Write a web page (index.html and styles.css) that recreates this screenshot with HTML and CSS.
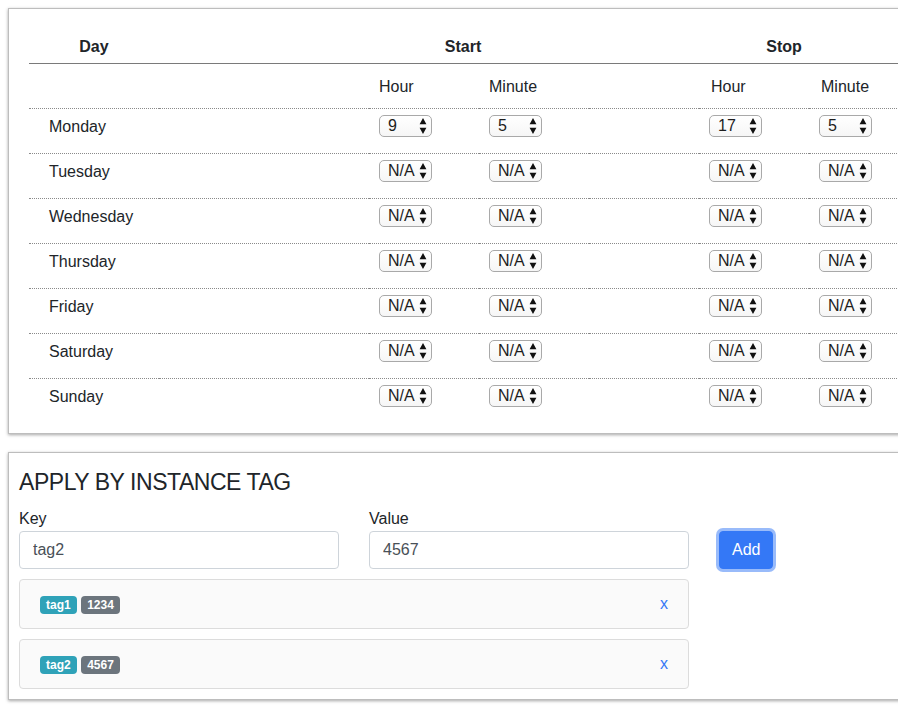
FILE: index.html
```html
<!DOCTYPE html>
<html lang="en">
<head>
<meta charset="utf-8">
<title>Schedule</title>
<link rel="stylesheet" href="styles.css">
</head>
<body>
<div class="viewport">
  <section class="card schedule">
    <table class="sched">
      <colgroup>
        <col class="c-day"><col class="c-gap1"><col class="c-num"><col class="c-num"><col class="c-gap2"><col class="c-num"><col class="c-num">
      </colgroup>
      <thead>
        <tr class="group">
          <th class="g-day">Day</th><th></th><th colspan="2" class="g-start">Start</th><th></th><th colspan="2" class="g-stop">Stop</th>
        </tr>
        <tr class="sub">
          <td></td><td></td><td>Hour</td><td>Minute</td><td></td><td class="stop-h">Hour</td><td class="stop-h">Minute</td>
        </tr>
      </thead>
      <tbody>
        <tr>
          <td class="day">Monday</td><td></td>
          <td><span class="sel"><span class="sel-v">9</span><svg class="arr" viewBox="0 0 8 18" width="8" height="18"><path d="M0.6 7.2 L4 1 L7.4 7.2 Z M0.6 10.8 L4 17 L7.4 10.8 Z"/></svg></span></td>
          <td><span class="sel"><span class="sel-v">5</span><svg class="arr" viewBox="0 0 8 18" width="8" height="18"><path d="M0.6 7.2 L4 1 L7.4 7.2 Z M0.6 10.8 L4 17 L7.4 10.8 Z"/></svg></span></td>
          <td></td>
          <td><span class="sel"><span class="sel-v">17</span><svg class="arr" viewBox="0 0 8 18" width="8" height="18"><path d="M0.6 7.2 L4 1 L7.4 7.2 Z M0.6 10.8 L4 17 L7.4 10.8 Z"/></svg></span></td>
          <td><span class="sel"><span class="sel-v">5</span><svg class="arr" viewBox="0 0 8 18" width="8" height="18"><path d="M0.6 7.2 L4 1 L7.4 7.2 Z M0.6 10.8 L4 17 L7.4 10.8 Z"/></svg></span></td>
        </tr>
        <tr>
          <td class="day">Tuesday</td><td></td>
          <td><span class="sel"><span class="sel-v">N/A</span><svg class="arr" viewBox="0 0 8 18" width="8" height="18"><path d="M0.6 7.2 L4 1 L7.4 7.2 Z M0.6 10.8 L4 17 L7.4 10.8 Z"/></svg></span></td>
          <td><span class="sel"><span class="sel-v">N/A</span><svg class="arr" viewBox="0 0 8 18" width="8" height="18"><path d="M0.6 7.2 L4 1 L7.4 7.2 Z M0.6 10.8 L4 17 L7.4 10.8 Z"/></svg></span></td>
          <td></td>
          <td><span class="sel"><span class="sel-v">N/A</span><svg class="arr" viewBox="0 0 8 18" width="8" height="18"><path d="M0.6 7.2 L4 1 L7.4 7.2 Z M0.6 10.8 L4 17 L7.4 10.8 Z"/></svg></span></td>
          <td><span class="sel"><span class="sel-v">N/A</span><svg class="arr" viewBox="0 0 8 18" width="8" height="18"><path d="M0.6 7.2 L4 1 L7.4 7.2 Z M0.6 10.8 L4 17 L7.4 10.8 Z"/></svg></span></td>
        </tr>
        <tr>
          <td class="day">Wednesday</td><td></td>
          <td><span class="sel"><span class="sel-v">N/A</span><svg class="arr" viewBox="0 0 8 18" width="8" height="18"><path d="M0.6 7.2 L4 1 L7.4 7.2 Z M0.6 10.8 L4 17 L7.4 10.8 Z"/></svg></span></td>
          <td><span class="sel"><span class="sel-v">N/A</span><svg class="arr" viewBox="0 0 8 18" width="8" height="18"><path d="M0.6 7.2 L4 1 L7.4 7.2 Z M0.6 10.8 L4 17 L7.4 10.8 Z"/></svg></span></td>
          <td></td>
          <td><span class="sel"><span class="sel-v">N/A</span><svg class="arr" viewBox="0 0 8 18" width="8" height="18"><path d="M0.6 7.2 L4 1 L7.4 7.2 Z M0.6 10.8 L4 17 L7.4 10.8 Z"/></svg></span></td>
          <td><span class="sel"><span class="sel-v">N/A</span><svg class="arr" viewBox="0 0 8 18" width="8" height="18"><path d="M0.6 7.2 L4 1 L7.4 7.2 Z M0.6 10.8 L4 17 L7.4 10.8 Z"/></svg></span></td>
        </tr>
        <tr>
          <td class="day">Thursday</td><td></td>
          <td><span class="sel"><span class="sel-v">N/A</span><svg class="arr" viewBox="0 0 8 18" width="8" height="18"><path d="M0.6 7.2 L4 1 L7.4 7.2 Z M0.6 10.8 L4 17 L7.4 10.8 Z"/></svg></span></td>
          <td><span class="sel"><span class="sel-v">N/A</span><svg class="arr" viewBox="0 0 8 18" width="8" height="18"><path d="M0.6 7.2 L4 1 L7.4 7.2 Z M0.6 10.8 L4 17 L7.4 10.8 Z"/></svg></span></td>
          <td></td>
          <td><span class="sel"><span class="sel-v">N/A</span><svg class="arr" viewBox="0 0 8 18" width="8" height="18"><path d="M0.6 7.2 L4 1 L7.4 7.2 Z M0.6 10.8 L4 17 L7.4 10.8 Z"/></svg></span></td>
          <td><span class="sel"><span class="sel-v">N/A</span><svg class="arr" viewBox="0 0 8 18" width="8" height="18"><path d="M0.6 7.2 L4 1 L7.4 7.2 Z M0.6 10.8 L4 17 L7.4 10.8 Z"/></svg></span></td>
        </tr>
        <tr>
          <td class="day">Friday</td><td></td>
          <td><span class="sel"><span class="sel-v">N/A</span><svg class="arr" viewBox="0 0 8 18" width="8" height="18"><path d="M0.6 7.2 L4 1 L7.4 7.2 Z M0.6 10.8 L4 17 L7.4 10.8 Z"/></svg></span></td>
          <td><span class="sel"><span class="sel-v">N/A</span><svg class="arr" viewBox="0 0 8 18" width="8" height="18"><path d="M0.6 7.2 L4 1 L7.4 7.2 Z M0.6 10.8 L4 17 L7.4 10.8 Z"/></svg></span></td>
          <td></td>
          <td><span class="sel"><span class="sel-v">N/A</span><svg class="arr" viewBox="0 0 8 18" width="8" height="18"><path d="M0.6 7.2 L4 1 L7.4 7.2 Z M0.6 10.8 L4 17 L7.4 10.8 Z"/></svg></span></td>
          <td><span class="sel"><span class="sel-v">N/A</span><svg class="arr" viewBox="0 0 8 18" width="8" height="18"><path d="M0.6 7.2 L4 1 L7.4 7.2 Z M0.6 10.8 L4 17 L7.4 10.8 Z"/></svg></span></td>
        </tr>
        <tr>
          <td class="day">Saturday</td><td></td>
          <td><span class="sel"><span class="sel-v">N/A</span><svg class="arr" viewBox="0 0 8 18" width="8" height="18"><path d="M0.6 7.2 L4 1 L7.4 7.2 Z M0.6 10.8 L4 17 L7.4 10.8 Z"/></svg></span></td>
          <td><span class="sel"><span class="sel-v">N/A</span><svg class="arr" viewBox="0 0 8 18" width="8" height="18"><path d="M0.6 7.2 L4 1 L7.4 7.2 Z M0.6 10.8 L4 17 L7.4 10.8 Z"/></svg></span></td>
          <td></td>
          <td><span class="sel"><span class="sel-v">N/A</span><svg class="arr" viewBox="0 0 8 18" width="8" height="18"><path d="M0.6 7.2 L4 1 L7.4 7.2 Z M0.6 10.8 L4 17 L7.4 10.8 Z"/></svg></span></td>
          <td><span class="sel"><span class="sel-v">N/A</span><svg class="arr" viewBox="0 0 8 18" width="8" height="18"><path d="M0.6 7.2 L4 1 L7.4 7.2 Z M0.6 10.8 L4 17 L7.4 10.8 Z"/></svg></span></td>
        </tr>
        <tr class="last">
          <td class="day">Sunday</td><td></td>
          <td><span class="sel"><span class="sel-v">N/A</span><svg class="arr" viewBox="0 0 8 18" width="8" height="18"><path d="M0.6 7.2 L4 1 L7.4 7.2 Z M0.6 10.8 L4 17 L7.4 10.8 Z"/></svg></span></td>
          <td><span class="sel"><span class="sel-v">N/A</span><svg class="arr" viewBox="0 0 8 18" width="8" height="18"><path d="M0.6 7.2 L4 1 L7.4 7.2 Z M0.6 10.8 L4 17 L7.4 10.8 Z"/></svg></span></td>
          <td></td>
          <td><span class="sel"><span class="sel-v">N/A</span><svg class="arr" viewBox="0 0 8 18" width="8" height="18"><path d="M0.6 7.2 L4 1 L7.4 7.2 Z M0.6 10.8 L4 17 L7.4 10.8 Z"/></svg></span></td>
          <td><span class="sel"><span class="sel-v">N/A</span><svg class="arr" viewBox="0 0 8 18" width="8" height="18"><path d="M0.6 7.2 L4 1 L7.4 7.2 Z M0.6 10.8 L4 17 L7.4 10.8 Z"/></svg></span></td>
        </tr>
      </tbody>
    </table>
  </section>

  <section class="card tags">
    <h4 class="tags-title">APPLY BY INSTANCE TAG</h4>
    <div class="tag-form">
      <div class="field">
        <label class="field-label">Key</label>
        <input class="field-input" type="text" value="tag2">
      </div>
      <div class="field">
        <label class="field-label">Value</label>
        <input class="field-input" type="text" value="4567">
      </div>
      <div class="field-action">
        <button class="btn-add" type="button">Add</button>
      </div>
    </div>
    <ul class="tag-list">
      <li class="tag-item">
        <span class="badges"><span class="badge badge-key">tag1</span> <span class="badge badge-val">1234</span></span>
        <a class="tag-remove">x</a>
      </li>
      <li class="tag-item">
        <span class="badges"><span class="badge badge-key">tag2</span> <span class="badge badge-val">4567</span></span>
        <a class="tag-remove">x</a>
      </li>
    </ul>
  </section>
</div>
</body>
</html>
```

FILE: styles.css
```css
* { box-sizing: border-box; }

html, body {
  margin: 0;
  padding: 0;
  background: #ffffff;
  overflow: hidden;
}

body {
  font-family: "Liberation Sans", Arial, Helvetica, sans-serif;
  font-size: 16px;
  line-height: 24px;
  color: #212529;
}

.viewport {
  width: 898px;
  height: 709px;
  overflow: hidden;
  padding: 8px;
}

.card {
  width: 940px;
  background: #fff;
  border: 1px solid #bdbdbd;
  box-shadow: 0 1px 3px rgba(0, 0, 0, 0.35);
}

/* ---------- schedule table ---------- */
.schedule {
  padding: 20px 20px 10px 20px;
  margin-bottom: 18px;
}

.sched {
  border-collapse: separate;
  border-spacing: 0;
  table-layout: fixed;
  width: 890px;
}

.c-day { width: 130px; }
.c-gap1 { width: 210px; }
.c-num { width: 110px; }
.c-gap2 { width: 110px; }

.sched th,
.sched td {
  padding: 0;
  text-align: left;
  vertical-align: top;
  line-height: 24px;
}

.group th {
  padding: 6px 10px 4px 10px;
  font-weight: bold;
  text-align: center;
  border-bottom: 1px solid #7a7a7a;
}

.group .g-start { padding-right: 42px; }
.group .g-stop { padding-right: 60px; }

.sub td {
  padding: 11px 10px 9px 10px;
  border-bottom: 1px dotted #8a8a8a;
}

.sub td.stop-h { padding-left: 12px; }

.sched tbody td {
  padding: 6px 10px 14px 10px;
  border-bottom: 1px dotted #8a8a8a;
}

.sched tbody tr.last td { border-bottom: none; }

.sched tbody td.day { padding-left: 20px; }

.sel {
  display: inline-flex;
  align-items: center;
  justify-content: space-between;
  width: 53px;
  height: 22px;
  margin-top: 0;
  vertical-align: top;
  padding: 0 4px 0 8px;
  border: 1px solid #a9a9a9;
  border-radius: 5px;
  background: linear-gradient(#ffffff, #f6f6f6);
  color: #1d1d1d;
  font-size: 16px;
  line-height: 20px;
}

.sel-v { display: block; }

.arr {
  display: block;
  fill: #111;
}

/* ---------- tags card ---------- */
.tags {
  padding: 10px;
}

.tags-title {
  margin: 5px 0 10px 0;
  font-size: 23px;
  line-height: 29px;
  font-weight: normal;
  letter-spacing: -0.45px;
  color: #212529;
}

.tag-form {
  display: grid;
  grid-template-columns: 320px 320px auto;
  column-gap: 30px;
  align-items: end;
}

.field { display: flex; flex-direction: column; }

.field-label {
  display: block;
  line-height: 24px;
  margin: 0;
}

.field-input {
  display: block;
  width: 320px;
  height: 38px;
  padding: 6px 13px;
  font-family: inherit;
  font-size: 16px;
  line-height: 24px;
  color: #495057;
  background: #fff;
  border: 1px solid #ced4da;
  border-radius: 4px;
  outline: none;
}

.field-action {
  display: flex;
  align-items: flex-start;
}

.btn-add {
  height: 38px;
  padding: 6px 12px;
  font-family: inherit;
  font-size: 16px;
  line-height: 24px;
  color: #fff;
  background: #3478f6;
  border: 1px solid #3478f6;
  border-radius: 4px;
  box-shadow: 0 0 0 3px rgba(52, 120, 246, 0.5);
}

.tag-list {
  list-style: none;
  margin: 10px 0 0 0;
  padding: 0;
  width: 670px;
  display: flex;
  flex-direction: column;
  gap: 10px;
}

.tag-item {
  display: flex;
  justify-content: space-between;
  align-items: baseline;
  padding: 12px 20px;
  background: #fafafa;
  border: 1px solid #dcdcdc;
  border-radius: 4px;
}

.badge {
  display: inline-block;
  padding: 3px 6px;
  font-size: 12px;
  font-weight: bold;
  line-height: 1;
  color: #fff;
  border-radius: 4px;
  vertical-align: baseline;
}

.badge-key { background: #2fa2b8; }
.badge-val { background: #6c757d; }

.tag-remove {
  color: #3478f6;
  cursor: pointer;
}
```
